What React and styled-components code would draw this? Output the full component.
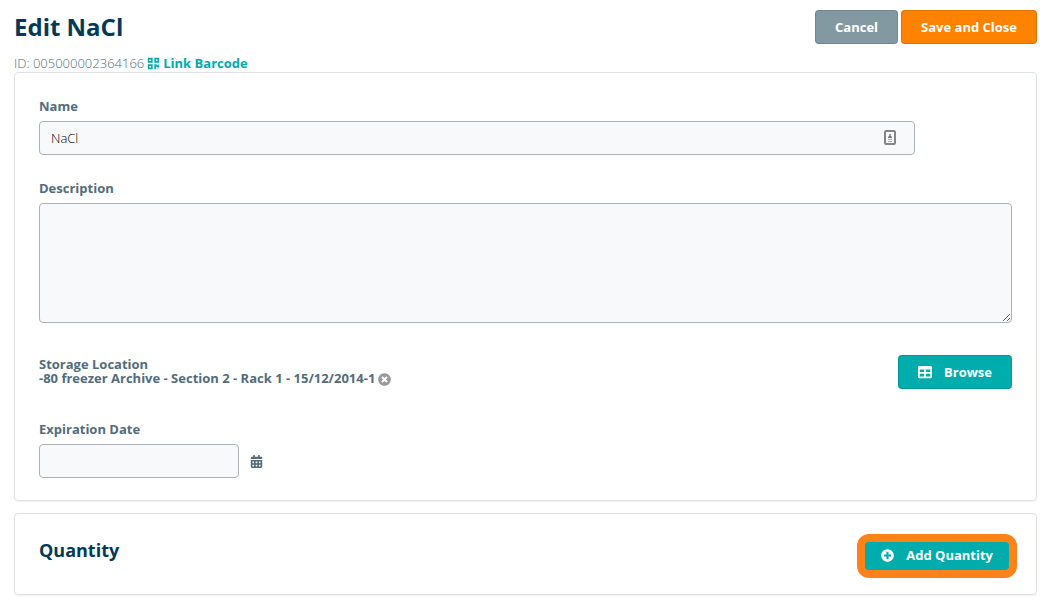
import React, { useState } from "react";
import styled, { createGlobalStyle } from "styled-components";
import {
  FaCalendarAlt,
  FaPlusCircle,
  FaQrcode,
  FaTable,
  FaTimesCircle,
} from "react-icons/fa";

const Colors = {
  navy: "#033a57",
  slate: "#516d7b",
  teal: "#00acac",
  orange: "#ff8200",
  grey: "#8399a2",
  field: "#f8f9fb",
};

const GlobalStyle = createGlobalStyle`
  * {
    box-sizing: border-box;
  }

  body {
    margin: 0;
    background: white;
    color: ${Colors.slate};
    font: 13px/14px "Open Sans", sans-serif;
  }
`;

const Style = {
  Page: styled.main`
    padding: 10px 23px 10px 14px;
  `,
  Header: styled.header`
    display: flex;
    justify-content: space-between;
    align-items: flex-start;
    height: 46px;
  `,
  Title: styled.h1`
    margin: 0;
    color: ${Colors.navy};
    font-size: 24px;
    line-height: 34px;
    font-weight: 700;
  `,
  Actions: styled.div`
    display: flex;
    gap: 3px;
  `,
  Button: styled.button`
    display: flex;
    align-items: center;
    justify-content: center;
    gap: 12px;
    height: ${(props) => (props.$compact ? "28px" : "34px")};
    padding: ${(props) => (props.$compact ? "0 16px 2px" : "0 19px")};
    border: ${(props) =>
      props.$compact ? "none" : "1px solid rgba(0, 0, 0, 0.12)"};
    border-radius: 4px;
    background: ${(props) => Colors[props.$color]};
    color: white;
    font: 700 13px/14px "Open Sans", sans-serif;
    white-space: nowrap;
    cursor: pointer;
  `,
  Meta: styled.div`
    display: flex;
    align-items: center;
    gap: 3px;
    height: 16px;
    padding-bottom: 2px;
    font-weight: 300;
  `,
  BarcodeLink: styled.a`
    display: flex;
    align-items: center;
    gap: 3px;
    color: ${Colors.teal};
    font-weight: 700;
    text-decoration: none;
  `,
  Panel: styled.section`
    margin-bottom: 12px;
    padding: 26px 24px 22px;
    border: 1px solid #dee2e6;
    border-radius: 4px;
    box-shadow: 0 1px 2px rgba(0, 0, 0, 0.06);
  `,
  QuantityPanel: styled.section`
    display: flex;
    justify-content: space-between;
    align-items: flex-start;
    padding: 20px 19px 16px 24px;
    border: 1px solid #dee2e6;
    border-radius: 4px;
    box-shadow: 0 1px 2px rgba(0, 0, 0, 0.06);
  `,
  Field: styled.div`
    display: flex;
    flex-direction: column;
    gap: 8px;
    margin-bottom: ${(props) => props.$space || 0}px;
  `,
  Label: styled.label`
    font-weight: 700;
  `,
  InputBox: styled.div`
    display: flex;
    align-items: center;
    width: ${(props) => props.$width};
    height: 34px;
    padding-right: 18px;
    border: 1px solid #aeb1b4;
    border-radius: 4px;
    background: ${Colors.field};
  `,
  Input: styled.input`
    flex: 1;
    min-width: 0;
    height: 32px;
    padding: 0 11px;
    border: none;
    outline: none;
    background: transparent;
    color: black;
    font: 300 13px "Open Sans", sans-serif;
  `,
  Textarea: styled.textarea`
    display: block;
    width: 100%;
    height: 120px;
    padding: 8px 11px;
    border: 1px solid #aeb1b4;
    border-radius: 4px;
    background: ${Colors.field};
    color: black;
    font: 300 13px "Open Sans", sans-serif;
  `,
  StorageRow: styled.div`
    display: flex;
    justify-content: space-between;
    align-items: flex-start;
    margin-bottom: 33px;
  `,
  Storage: styled.div`
    padding-top: 2px;
    font-weight: 700;
  `,
  Location: styled.div`
    display: flex;
    align-items: flex-start;
    gap: 3px;
    height: 14px;
  `,
  IconButton: styled.button`
    display: flex;
    padding: ${(props) => (props.$low ? "2px 0 0" : "0")};
    border: none;
    background: none;
    color: ${(props) => props.$color};
    cursor: pointer;
  `,
  DateRow: styled.div`
    display: flex;
    align-items: center;
    gap: 11px;
  `,
  Subtitle: styled.h2`
    margin: 0;
    color: ${Colors.navy};
    font-size: 18px;
    line-height: 32px;
    font-weight: 700;
  `,
  Highlight: styled.div`
    border: 8px solid #ff8218;
    border-radius: 12px;
    background: #ff8218;
  `,
};

function ContactIcon() {
  return (
    <svg width="12" height="16" viewBox="0 0 12 16" aria-hidden="true">
      <rect
        x="1"
        y="1"
        width="10"
        height="13"
        rx="1"
        fill="none"
        stroke="#858585"
        strokeWidth="2"
      />
      <circle cx="6" cy="5" r="1" fill="#777" />
      <path d="M4 8V7l1-1h2l1 1v1z" fill="#777" />
      <path d="M4 9.5h4M4 11.5h4" stroke="#aaa" />
    </svg>
  );
}

function App() {
  const [name, setName] = useState("NaCl");
  const [description, setDescription] = useState("");
  const [location, setLocation] = useState(
    "-80 freezer Archive - Section 2 - Rack 1 - 15/12/2014-1"
  );
  const [expiration, setExpiration] = useState("");

  return (
    <Style.Page>
      <GlobalStyle />
      <Style.Header>
        <Style.Title>Edit NaCl</Style.Title>
        <Style.Actions>
          <Style.Button type="button" $color="grey">
            Cancel
          </Style.Button>
          <Style.Button type="button" $color="orange">
            Save and Close
          </Style.Button>
        </Style.Actions>
      </Style.Header>
      <Style.Meta>
        <span>ID: 005000002364166</span>
        <Style.BarcodeLink href="#barcode">
          <FaQrcode size={13} />
          Link Barcode
        </Style.BarcodeLink>
      </Style.Meta>

      <Style.Panel>
        <Style.Field $space={26}>
          <Style.Label htmlFor="name">Name</Style.Label>
          <Style.InputBox $width="90%">
            <Style.Input
              id="name"
              type="text"
              value={name}
              onChange={(e) => setName(e.target.value)}
            />
            <ContactIcon />
          </Style.InputBox>
        </Style.Field>
        <Style.Field $space={32}>
          <Style.Label htmlFor="description">Description</Style.Label>
          <Style.Textarea
            id="description"
            value={description}
            onChange={(e) => setDescription(e.target.value)}
          />
        </Style.Field>
        <Style.StorageRow>
          <Style.Storage>
            <div>Storage Location</div>
            {location && (
              <Style.Location>
                {location}
                <Style.IconButton
                  type="button"
                  aria-label="Remove location"
                  $color="#999"
                  $low
                  onClick={() => setLocation("")}
                >
                  <FaTimesCircle size={13} />
                </Style.IconButton>
              </Style.Location>
            )}
          </Style.Storage>
          <Style.Button type="button" $color="teal">
            <FaTable size={14} />
            Browse
          </Style.Button>
        </Style.StorageRow>
        <Style.Field>
          <Style.Label htmlFor="expiration">Expiration Date</Style.Label>
          <Style.DateRow>
            <Style.InputBox $width="200px">
              <Style.Input
                id="expiration"
                type="text"
                value={expiration}
                onChange={(e) => setExpiration(e.target.value)}
              />
            </Style.InputBox>
            <Style.IconButton
              type="button"
              aria-label="Open calendar"
              $color={Colors.slate}
            >
              <FaCalendarAlt size={13} />
            </Style.IconButton>
          </Style.DateRow>
        </Style.Field>
      </Style.Panel>

      <Style.QuantityPanel>
        <Style.Subtitle>Quantity</Style.Subtitle>
        <Style.Highlight>
          <Style.Button type="button" $color="teal" $compact>
            <FaPlusCircle size={13} />
            Add Quantity
          </Style.Button>
        </Style.Highlight>
      </Style.QuantityPanel>
    </Style.Page>
  );
}

export default App;
